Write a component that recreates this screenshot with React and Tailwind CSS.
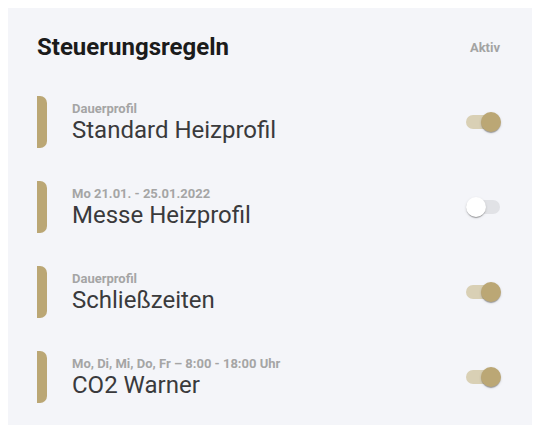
import { useState } from 'react'

const rules = [
  { id: 1, sub: 'Dauerprofil', name: 'Standard Heizprofil', on: true },
  { id: 2, sub: 'Mo 21.01. - 25.01.2022', name: 'Messe Heizprofil', on: false },
  { id: 3, sub: 'Dauerprofil', name: 'Schließzeiten', on: true },
  { id: 4, sub: 'Mo, Di, Mi, Do, Fr – 8:00 - 18:00 Uhr', name: 'CO2 Warner', on: true },
]

function Toggle({ on, onClick }) {
  return (
    <button onClick={onClick} className="relative w-[34px] h-[14px] shrink-0">
      <span className={`absolute inset-0 rounded-full ${on ? 'bg-[#d9d0b5]' : 'bg-[#e1e2e6]'}`} />
      <span
        className={`absolute top-[-3px] w-[20px] h-[20px] rounded-full shadow-[0_2px_1px_-1px_rgba(0,0,0,0.2),0_1px_1px_0_rgba(0,0,0,0.14),0_1px_3px_0_rgba(0,0,0,0.12)] ${on ? 'left-[15px] bg-[#bba775]' : 'left-0 bg-white'}`}
      />
    </button>
  )
}

export default function App() {
  const [items, setItems] = useState(rules)

  const flip = (id) => setItems(items.map((r) => (r.id === id ? { ...r, on: !r.on } : r)))

  return (
    <div className="bg-white min-h-screen pt-2 pl-2" style={{ fontFamily: 'Roboto, "Noto Sans", sans-serif' }}>
      <div className="w-[524px] h-[417px] bg-[#f4f5f9] pt-[25px] pl-[29px] pr-[32px]">
        <div className="flex items-center justify-between h-[28px]">
          <h1 className="text-[24px] leading-[28px] font-bold text-[#1b1b1b]">Steuerungsregeln</h1>
          <span className="text-[13px] leading-[15px] font-bold text-[#a3a3a3]">Aktiv</span>
        </div>

        <div className="mt-[35px] flex flex-col gap-[33px]">
          {items.map((r) => (
            <div key={r.id} className="flex items-center h-[52px]">
              <div className="w-[10px] h-[52px] rounded-r-[7px] bg-[#bba775]" />
              <div className="ml-[25px] pt-[1px] flex-1 flex flex-col">
                <span className="text-[13px] leading-[15px] font-bold text-[#a5a5a5]">{r.sub}</span>
                <span className="text-[24px] leading-[28px] text-[#3a3a3c]">{r.name}</span>
              </div>
              <Toggle on={r.on} onClick={() => flip(r.id)} />
            </div>
          ))}
        </div>
      </div>
    </div>
  )
}
